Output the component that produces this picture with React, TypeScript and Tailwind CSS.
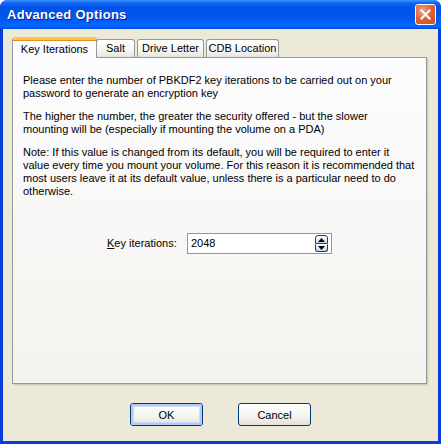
import { useState } from 'react';

const TABS = [
    { label: 'Key Iterations', w: 'w-[85px]' },
    { label: 'Salt', w: 'w-[39px]' },
    { label: 'Drive Letter', w: 'w-[67px]' },
    { label: 'CDB Location', w: 'w-[73px]' },
];

// lines broken where the original dialog wraps them
const PARAGRAPHS = [
    ['Please enter the number of PBKDF2 key iterations to be carried out on your', 'password to generate an encryption key'],
    ['The higher the number, the greater the security offered - but the slower', 'mounting will be (especially if mounting the volume on a PDA)'],
    [
        'Note: If this value is changed from its default, you will be required to enter it',
        'value every time you mount your volume. For this reason it is recommended that',
        'most users leave it at its default value, unless there is a particular need to do',
        'otherwise.',
    ],
];

function TitleBar() {
    return (
        <div className="h-[29px] flex items-center justify-between pl-[7px] pr-[5px] rounded-t-[7px] bg-[linear-gradient(to_bottom,#3D95FF_0%,#1466F0_10%,#0053E6_25%,#0058EE_60%,#0066FF_88%,#0060F8_94%,#0048DD_100%)]">
            <span className="text-white font-bold text-[13px] tracking-[0.3px] [text-shadow:1px_1px_0_#0F1E8A] font-['Liberation_Sans',sans-serif]">
                Advanced Options
            </span>
            <button className="w-[21px] h-[21px] rounded-[3px] border border-white flex items-center justify-center bg-[radial-gradient(circle_at_35%_30%,#F2A58B_0%,#E5623A_45%,#CC4A1F_100%)]">
                <svg width="11" height="11" viewBox="0 0 11 11">
                    <path d="M1.5 1.5 L9.5 9.5 M9.5 1.5 L1.5 9.5" stroke="white" strokeWidth="2" strokeLinecap="square" />
                </svg>
            </button>
        </div>
    );
}

function SpinButton() {
    return (
        <div className="flex flex-col w-[13px] h-[17px]">
            <div className="flex-1 rounded-t-[3px] rounded-b-[1px] border border-[#1E3C6E] bg-[linear-gradient(to_bottom,#FFFFFF,#C9D8F5)] flex items-center justify-center">
                <svg width="7" height="4" viewBox="0 0 7 4"><path d="M3.5 0 L7 4 L0 4 Z" fill="black" /></svg>
            </div>
            <div className="flex-1 rounded-b-[3px] rounded-t-[1px] border border-t-0 border-[#1E3C6E] bg-[linear-gradient(to_bottom,#FFFFFF,#C9D8F5)] flex items-center justify-center">
                <svg width="7" height="4" viewBox="0 0 7 4"><path d="M0 0 L7 0 L3.5 4 Z" fill="black" /></svg>
            </div>
        </div>
    );
}

function XpButton({ label, isDefault }: { label: string; isDefault?: boolean }) {
    return (
        <button className="w-[73px] h-[23px] rounded-[3px] border border-[#003C74] bg-[linear-gradient(to_bottom,#FFFFFF,#F3F3EF_60%,#E3E2DA)] p-0">
            <div className={`w-full h-full rounded-[2px] flex items-center justify-center pt-[1px] text-[11px] text-black ${isDefault ? 'border-2 border-[#B3C8F5] shadow-[inset_0_0_0_1px_#CEDCF8]' : ''}`}>
                {label}
            </div>
        </button>
    );
}

export default function App() {
    const [active, setActive] = useState(0);
    const [value, setValue] = useState('2048');

    return (
        <div className="w-[441px] h-[444px] flex flex-col bg-[#0A3BDB] rounded-t-[8px] font-['Liberation_Sans',Arial,sans-serif] text-[11px] text-black">
            <TitleBar />
            <div className="flex-1 flex flex-col bg-[#ECE9D8] mx-[3px] mb-[3px] pt-[8px] px-[9px]">
                {/* tab strip */}
                <div className="flex items-end h-[20px]">
                    {TABS.map((t, i) =>
                        i === active ? (
                            <div
                                key={t.label}
                                onClick={() => setActive(i)}
                                className={`${t.w} relative z-10 -mb-[1px] h-[21px] flex items-center justify-center bg-[#FCFCFE] border-x border-[#919B9C] rounded-t-[3px] border-t-[3px] border-t-[#FFC83C] shadow-[inset_0_1px_0_#E68B2C]`}
                            >
                                {t.label}
                            </div>
                        ) : (
                            <div
                                key={t.label}
                                onClick={() => setActive(i)}
                                className={`${t.w} h-[18px] flex items-center justify-center border border-b-0 border-[#919B9C] rounded-t-[3px] bg-[linear-gradient(to_bottom,#FFFFFF,#F3F3EF_70%,#E5E4DD)] ${i === active + 1 ? '-ml-[1px]' : 'ml-[2px]'}`}
                            >
                                {t.label}
                            </div>
                        )
                    )}
                </div>
                {/* panel */}
                <div className="w-[415px] h-[327px] border border-[#919B9C] bg-[linear-gradient(to_bottom,#FCFCFE,#F4F3EE)] shadow-[1px_1px_0_#D0CEBF,2px_2px_0_#E0DDCD] pt-[16px] pl-[10px] pr-[2px] leading-[13px] whitespace-nowrap">
                    {PARAGRAPHS.map((lines, i) => (
                        <p key={i} className={i > 0 ? 'mt-[10px]' : ''}>
                            {lines.map((l, j) => (
                                <span key={j} className="block">{l}</span>
                            ))}
                        </p>
                    ))}
                    <div className="flex items-center mt-[35px] ml-[84px]">
                        <label className="w-[80px]">
                            <span className="underline">K</span>ey iterations:
                        </label>
                        <div className="w-[145px] h-[21px] border border-[#7F9DB9] bg-white flex items-center pl-[3px] pr-[3px]">
                            <input
                                value={value}
                                onChange={(e) => setValue(e.target.value)}
                                className="flex-1 min-w-0 outline-none bg-transparent text-[11px]"
                            />
                            <SpinButton />
                        </div>
                    </div>
                </div>
                {/* buttons */}
                <div className="flex justify-center gap-[35px] mt-[19px]">
                    <XpButton label="OK" isDefault />
                    <XpButton label="Cancel" />
                </div>
            </div>
        </div>
    );
}
